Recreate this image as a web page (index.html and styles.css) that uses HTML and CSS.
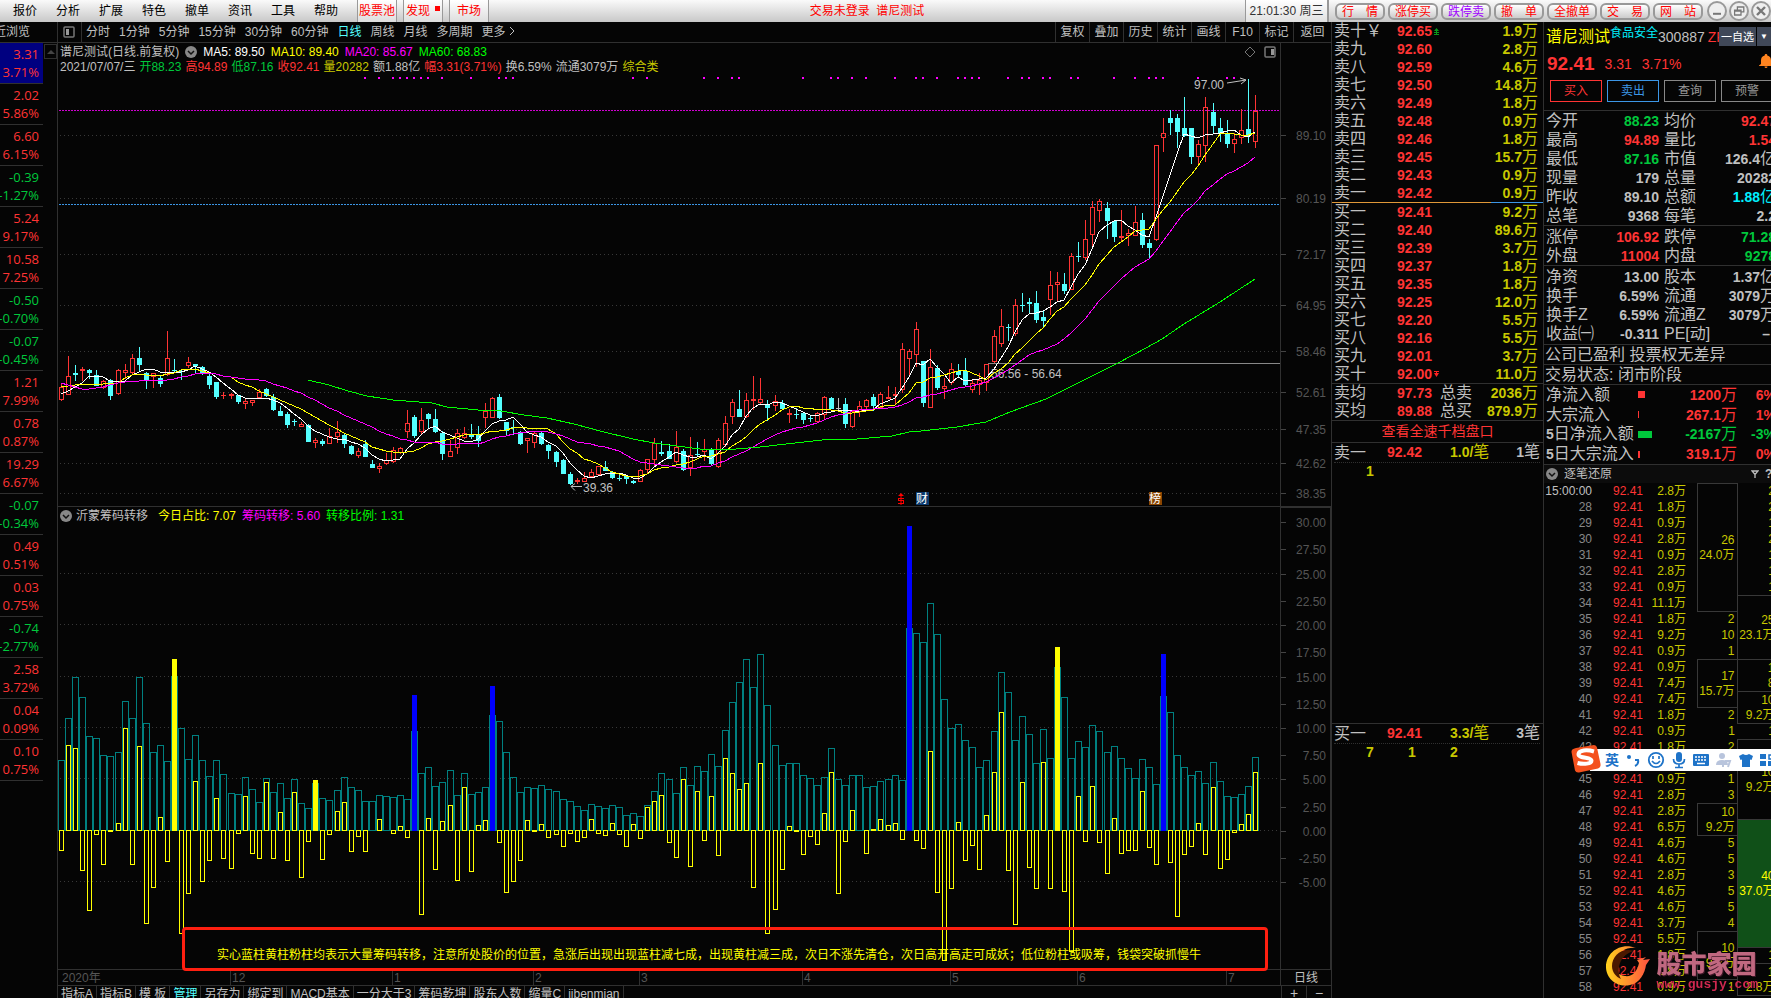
FILE: index.html
```html
<!doctype html>
<html lang="zh-CN">
<head>
    <meta charset="UTF-8">
    <meta name="viewport" content="width=device-width, initial-scale=1.0">
    <title>谱尼测试 300887</title>
    <link rel="stylesheet" href="styles.css">
</head>
<body>
<!-- 顶部菜单 -->
<header class="topbar">
    <nav class="menu">
        <a href="#">报价</a><a href="#">分析</a><a href="#">扩展</a><a href="#">特色</a><a href="#">撤单</a><a href="#">资讯</a><a href="#">工具</a><a href="#">帮助</a>
    </nav>
    <div class="hot">
        <button type="button">股票池</button>
        <button type="button" class="new">发现</button>
        <button type="button">市场</button>
    </div>
    <h1 class="title">交易未登录&nbsp; 谱尼测试</h1>
    <div class="clock">21:01:30 周三</div>
    <div class="pills">
        <button type="button">行　情</button>
        <button type="button">涨停买</button>
        <button type="button" class="purple">跌停卖</button>
        <button type="button">撤　单</button>
        <button type="button">全撤单</button>
        <button type="button">交　易</button>
        <button type="button">网　站</button>
    </div>
    <div class="win">
        <button type="button" aria-label="最小化"><svg viewBox="0 0 20 20"><path d="M5 13.5h10" stroke="#777" stroke-width="2.5"/></svg></button>
        <button type="button" aria-label="还原"><svg viewBox="0 0 20 20"><path d="M8 8V5h8v6h-3M4.500 9h8v6h-8zM4.500 10h8" fill="none" stroke="#777" stroke-width="1.600"/></svg></button>
        <button type="button" aria-label="关闭"><svg viewBox="0 0 20 20"><path d="M5 5l10 10M15 5L5 15" stroke="#777" stroke-width="3"/></svg></button>
    </div>
</header>

<main class="main">
    <div class="left">
        <!-- 周期工具栏 -->
        <div class="toolbar">
            <div class="recent"><span>最近浏览</span></div>
            <button type="button" class="layout" aria-label="布局"><svg width="12" height="12" viewBox="0 0 12 12"><rect x="1" y="1" width="10" height="10" rx="1" fill="none" stroke="#777" stroke-width="1.500"/><path d="M3 3h3v6H3z" fill="#999"/></svg></button>
            <nav class="periods">
                <a href="#">分时</a><a href="#">1分钟</a><a href="#">5分钟</a><a href="#">15分钟</a><a href="#">30分钟</a><a href="#">60分钟</a><a href="#" class="on">日线</a><a href="#">周线</a><a href="#">月线</a><a href="#">多周期</a><a href="#">更多
                <svg width="6" height="10" viewBox="0 0 6 10"><path d="M1 1l4 4-4 4" fill="none" stroke="#c0c0c0"/></svg></a>
            </nav>
            <nav class="tools">
                <a href="#">复权</a><a href="#">叠加</a><a href="#">历史</a><a href="#">统计</a><a href="#">画线</a><a href="#">F10</a><a href="#">标记</a><a href="#">返回</a>
            </nav>
        </div>

        <div class="work">
            <!-- 最近浏览 -->
            <aside class="watch">
                <ul id="watch"></ul>
                <button type="button" class="up" aria-label="向上"></button>
            </aside>

            <section class="charts">
                <div class="panel">
                    <div class="plot">
                        <svg id="kline" class="draw"></svg>
                        <div class="head">
                            <div class="info wide">
                                <span>谱尼测试(日线.前复权)</span>
                                <svg class="fold" viewBox="0 0 12 12"><circle cx="6" cy="6" r="6" fill="#888"/><path d="M3 5l3 3 3-3" fill="none" stroke="#111" stroke-width="1.500"/></svg>
                                <span class="white">MA5: 89.50</span>
                                <span class="yellow">MA10: 89.40</span>
                                <span class="pink">MA20: 85.67</span>
                                <span class="lime">MA60: 68.83</span>
                            </div>
                            <div class="info">
                                <span>2021/07/07/三</span><span class="down">开88.23</span><span class="rise">高94.89</span><span class="down">低87.16</span><span class="rise">收92.41</span><span class="vol">量20282</span><span>额1.88亿</span><span class="rise">幅3.31(3.71%)</span><span>换6.59%</span><span>流通3079万</span><span class="vol">综合类</span>
                            </div>
                        </div>
                        <div class="corner">
                            <svg width="12" height="12" viewBox="0 0 12 12"><path d="M6 1l5 5-5 5-5-5z" fill="none" stroke="#777"/></svg>
                            <svg width="12" height="12" viewBox="0 0 12 12"><rect x="1" y="1" width="10" height="10" rx="1" fill="none" stroke="#777" stroke-width="1.500"/><path d="M7 3h3v6H7z" fill="#999"/></svg>
                        </div>
                    </div>
                    <svg id="kaxis" class="axis"></svg>
                </div>

                <div class="panel">
                    <div class="plot">
                        <svg id="chips" class="draw"></svg>
                        <div class="head">
                            <div class="info wide">
                                <svg class="fold" viewBox="0 0 12 12"><circle cx="6" cy="6" r="6" fill="#888"/><path d="M3 5l3 3 3-3" fill="none" stroke="#111" stroke-width="1.500"/></svg>
                                <span class="name">沂蒙筹码转移</span>
                                <span class="yellow">今日占比: 7.07</span>
                                <span class="pink">筹码转移: 5.60</span>
                                <span class="lime">转移比例: 1.31</span>
                            </div>
                        </div>
                        <p class="note">实心蓝柱黄柱粉柱均表示大量筹码转移，注意所处股价的位置，急涨后出现出现蓝柱减七成，出现黄柱减三成，次日不涨先清仓，次日高开高走可成妖；低位粉柱或吸筹，钱袋突破抓慢牛</p>
                    </div>
                    <svg id="caxis" class="axis boxed"></svg>
                </div>

                <div class="months">
                    <svg id="months"></svg>
                    <span>日线</span>
                </div>
                <div class="tabs">
                    <nav>
                        <a href="#">指标A</a><a href="#">指标B</a><a href="#">模 板</a><a href="#" class="on">管理</a><a href="#">另存为</a><a href="#">绑定到</a><a href="#">MACD基本</a><a href="#">一分大于3</a><a href="#">筹码乾坤</a><a href="#">股东人数</a><a href="#">缩量C</a><a href="#">jibenmian</a>
                    </nav>
                    <button type="button">+</button>
                    <button type="button">−</button>
                </div>
            </section>
        </div>
    </div>

    <!-- 十档盘口 -->
    <section class="book">
        <table id="asks"></table>
        <table id="bids"></table>
        <table class="avg">
            <tr><th>卖均</th><td class="rise">97.73</td><th>总卖</th><td class="vol">2036<i>万</i></td></tr>
            <tr><th>买均</th><td class="rise">89.88</td><th>总买</th><td class="vol">879.9<i>万</i></td></tr>
        </table>
        <a class="more" href="#">查看全速千档盘口</a>
        <div class="queue">
            <div class="qhead"><i>卖一</i><b class="rise">92.42</b><b class="vol">1.0/<i>笔</i></b><b>1<i>笔</i></b></div>
            <div class="qlist"><span>1</span></div>
        </div>
        <div class="queue">
            <div class="qhead"><i>买一</i><b class="rise">92.41</b><b class="vol">3.3/<i>笔</i></b><b>3<i>笔</i></b></div>
            <div class="qlist"><span>7</span><span>1</span><span>2</span></div>
        </div>
    </section>

    <!-- 个股行情 -->
    <aside class="quote">
        <div class="inner">
            <div class="stock">
                <strong>谱尼测试</strong><a href="#">食品安全</a><span>300887</span><em>ZF</em>
            </div>
            <div class="last"><b>92.41</b><span>3.31</span><span>3.71%</span></div>
            <div class="trade">
                <button type="button" class="buy">买入</button>
                <button type="button" class="sell">卖出</button>
                <button type="button">查询</button>
                <button type="button">预警</button>
            </div>
            <table class="data">
                <tr><th>今开</th><td class="down">88.23</td><th>均价</th><td class="rise">92.47</td></tr>
                <tr><th>最高</th><td class="rise">94.89</td><th>量比</th><td class="rise">1.54</td></tr>
                <tr><th>最低</th><td class="down">87.16</td><th>市值</th><td>126.4<i>亿</i></td></tr>
                <tr><th>现量</th><td>179</td><th>总量</th><td>20282</td></tr>
                <tr><th>昨收</th><td>89.10</td><th>总额</th><td class="aqua">1.88<i>亿</i></td></tr>
                <tr><th>总笔</th><td>9368</td><th>每笔</th><td>2.2</td></tr>
            </table>
            <table class="data">
                <tr><th>涨停</th><td class="rise">106.92</td><th>跌停</th><td class="down">71.28</td></tr>
                <tr><th>外盘</th><td class="rise">11004</td><th>内盘</th><td class="down">9278</td></tr>
            </table>
            <table class="data">
                <tr><th>净资</th><td>13.00</td><th>股本</th><td>1.37<i>亿</i></td></tr>
                <tr><th>换手</th><td>6.59%</td><th>流通</th><td>3079<i>万</i></td></tr>
                <tr><th>换手Z</th><td>6.59%</td><th>流通Z</th><td>3079<i>万</i></td></tr>
                <tr><th>收益㈠</th><td>-0.311</td><th>PE[动]</th><td class="none">–</td></tr>
            </table>
            <p class="line">公司已盈利 投票权无差异</p>
            <p class="line">交易状态: 闭市阶段</p>
            <table class="flow">
                <tr><th>净流入额</th><td><span class="bar big"></span></td><td class="rise">1200<i>万</i></td><td class="rise">6%</td></tr>
                <tr><th>大宗流入</th><td><span class="bar thin"></span></td><td class="rise">267.1<i>万</i></td><td class="rise">1%</td></tr>
                <tr><th><b>5</b>日净流入额</th><td><span class="bar out"></span></td><td class="down">-2167<i>万</i></td><td class="down">-3%</td></tr>
                <tr><th><b>5</b>日大宗流入</th><td><span class="bar small"></span></td><td class="rise">319.1<i>万</i></td><td class="rise">0%</td></tr>
            </table>
            <div class="tickhead">
                <svg class="fold" viewBox="0 0 12 12"><circle cx="6" cy="6" r="6" fill="#888"/><path d="M3 5l3 3 3-3" fill="none" stroke="#111" stroke-width="1.500"/></svg>
                <span>逐笔还原</span>
                <svg width="8" height="8" viewBox="0 0 8 8"><path d="M1 1h6L4 4.500zM4 4v4" fill="none" stroke="#c0c0c0" stroke-width="1.300"/></svg>
                <b>?</b>
            </div>
            <table class="ticks" id="ticks"></table>
        </div>
        <div class="pick"><button type="button">一自选</button><button type="button" class="arrow" aria-label="展开">▼</button></div>
        <svg class="bell" width="14" height="14" viewBox="0 0 14 14"><path d="M7 0c1 0 1.300.6 1.300 1.400C11 2 12 4 12 6.500V10l2 1.500V12H0v-.5L2 10V6.500C2 4 3 2 5.700 1.400 5.700.6 6 0 7 0zM5.500 12.500h3Q8.500 14 7 14t-1.500-1.500z" fill="#ff8420"/></svg>
    </aside>
</main>

<!-- 输入法状态栏 -->
<div class="ime">
    <svg class="sogou" width="30" height="28" viewBox="0 0 30 28"><path d="M5 3L23 0q2.500 0 3 2.500L29.500 19q.5 3-2.500 4.500L8 27.500q-3 .5-4-2L.5 7Q0 4 5 3z" fill="#f4511e"/><path d="M23 6.500C16 4.500 8 5 7.500 9c-.5 4.500 13 3 13 6.500 0 3.500-8 4-14 2.500" fill="none" stroke="#fff" stroke-width="4"/></svg>
    <b>英</b>
    <svg width="14" height="18" viewBox="0 0 14 18"><circle cx="3" cy="6" r="2" fill="#1e73c8"/><path d="M9 9h3q1 4-3 6" fill="none" stroke="#1e73c8" stroke-width="2"/></svg>
    <svg width="18" height="18" viewBox="0 0 18 18"><circle cx="9" cy="9" r="7.200" fill="none" stroke="#1e73c8" stroke-width="1.800"/><path d="M6 5v3M12 5v3M5 10q4 5 8 0" fill="none" stroke="#1e73c8" stroke-width="1.700"/></svg>
    <svg width="14" height="18" viewBox="0 0 14 18"><rect x="4" y="1" width="6" height="10" rx="3" fill="#1e73c8"/><path d="M1.500 8q0 5 5.500 5t5.500-5M7 13v3M3 16.500h8" fill="none" stroke="#1e73c8" stroke-width="1.700"/></svg>
    <svg width="16" height="18" viewBox="0 0 16 18"><rect y="3" width="16" height="12" rx="1" fill="#1e73c8"/><path d="M2 6h12M2 9h12" stroke="#fff" stroke-width="1.500" stroke-dasharray="2 1"/><path d="M4 12.500h8" stroke="#fff" stroke-width="1.500"/></svg>
    <svg width="16" height="18" viewBox="0 0 16 18"><circle cx="6" cy="5" r="3" fill="#b8c4dc"/><path d="M0 14q0-5 6-5t6 5z" fill="#b8c4dc"/><path d="M7 10v6M9 10h5l-2 6" fill="none" stroke="#b8c4dc" stroke-width="2"/></svg>
    <svg width="14" height="18" viewBox="0 0 14 18"><path d="M4 3q3 2 6 0l4 2-1.500 4L11 8.500V16H3V8.500L1.500 9 0 5z" fill="#1e73c8"/></svg>
    <svg width="14" height="18" viewBox="0 0 14 18"><path d="M0 3h6v5H0zM0 10h6v5H0zM8 10h6v5H8z" fill="#1e73c8"/><path d="M9 4h4v4H9z" fill="none" stroke="#1e73c8" stroke-width="1.500"/></svg>
</div>

<!-- 站点水印 -->
<div class="brand">
    <svg width="46" height="42" viewBox="0 0 46 42">
        <defs><linearGradient id="fire" x1="0" x2="1"><stop offset="0" stop-color="#ffd21c"/><stop offset="1" stop-color="#ff5040"/></linearGradient></defs>
        <path d="M31 2C16-4 1 6 1 21c0 12 12 21 24 18 10-2 15-12 16-20l4-6-7 1 3-3-9 3 2 3c-2 9-7 14-14 13C11 29 7 22 11 13c3-7 10-12 20-11z" fill="url(#fire)"/>
        <path d="M29 5C17 1 7 10 7 20c0 6 4 11 9 13C11 24 14 9 29 5z" fill="#4a1800"/>
    </svg>
    <div><strong>股市家园</strong><span>www.gusjy.com</span></div>
</div>

<script src="script.js"></script>
</body>
</html>
```
FILE: styles.css
```css
* {
    margin: 0;
    padding: 0;
    box-sizing: border-box;
}

body {
    display: flex;
    flex-direction: column;
    height: 100vh;
    overflow: hidden;
    background: #050505;
    color: #c0c0c0;
    font: 12px/16px "Liberation Sans", "Noto Sans CJK SC", sans-serif;
    white-space: nowrap;
}

a {
    color: inherit;
    text-decoration: none;
}

button {
    font: inherit;
    color: inherit;
    background: none;
    border: none;
    cursor: pointer;
    white-space: nowrap;
}

ul {
    list-style: none;
}

i, em {
    font-style: normal;
}

svg {
    display: block;
    flex: none;
}

table {
    border-collapse: collapse;
    border-spacing: 0;
}

th, td {
    vertical-align: middle;
}

.rise { color: #ff3434; }
.down { color: #00c83c; }
.vol { color: #c8c800; }
.aqua { color: #00f0ff; }
.white { color: #fff; }
.yellow { color: #ff0; }
.pink { color: #f0f; }
.lime { color: #0f0; }

/* 顶部 */
.topbar {
    display: flex;
    flex: none;
    height: 22px;
    background: linear-gradient(#fafafa, #c8c8c8);
    color: #000;
    line-height: 22px;
}

.menu {
    display: flex;
    flex: none;
    gap: 19px;
    padding-left: 13px;
    width: 357px;
}

.hot {
    display: flex;
    gap: 6px;
}

.hot button {
    position: relative;
    width: 40px;
    border: 1px solid #999;
    border-width: 0 1px;
    background: linear-gradient(#fff, #ddd);
    color: #f00;
    line-height: 22px;
}

.hot .new {
    padding-right: 10px;
}

.hot .new::after {
    content: "";
    position: absolute;
    right: 2px;
    top: 6px;
    width: 5px;
    height: 5px;
    background: #f00;
}

.title {
    flex: 1;
    text-align: center;
    color: #f00;
    font-size: 12px;
    font-weight: normal;
}

.clock {
    width: 84px;
    border: 2px solid #999;
    border-width: 0 2px 0 1px;
    background: linear-gradient(#fff, #e0e0e0);
    color: #333;
    text-align: center;
}

.pills {
    display: flex;
    gap: 3px;
    padding: 3px 4px 2px 6px;
}

.pills button {
    width: 50px;
    border: 2px solid #999;
    border-radius: 6px;
    background: linear-gradient(#fff, #ccc);
    color: #f00;
    line-height: 12px;
}

.pills .purple {
    color: #a000ff;
}

.win {
    display: flex;
    gap: 2px;
    padding-top: 1px;
}

.win button {
    width: 20px;
    height: 20px;
    border: 2px solid #999;
    border-radius: 50%;
    background: #eee;
}

/* 主体 */
.main {
    display: flex;
    flex: 1;
    min-height: 0;
}

.left {
    display: flex;
    flex: 1;
    flex-direction: column;
    min-width: 0;
}

.toolbar {
    display: flex;
    flex: none;
    height: 21px;
    border-bottom: 1px solid #303030;
    line-height: 20px;
}

.recent {
    display: flex;
    justify-content: flex-end;
    width: 58px;
    padding-right: 27px;
    overflow: hidden;
    border-right: 1px solid #303030;
}

.layout {
    width: 24px;
    padding-left: 5px;
    border-right: 1px solid #303030;
}

.periods {
    display: flex;
    flex: 1;
    gap: 9px;
    padding-left: 4px;
}

.periods svg {
    display: inline-block;
}

.periods .on, .tabs .on {
    color: #54ffff;
}

.tools {
    display: flex;
}

.tools a {
    width: 34px;
    border-left: 1px solid #303030;
    text-align: center;
}

.tools a:last-child {
    width: 38px;
}

.work {
    display: flex;
    flex: 1;
    min-height: 0;
}

.watch {
    display: flex;
    width: 58px;
    border-right: 1px solid #303030;
    font-family: "Open Sans", sans-serif;
    font-size: 13px;
}

.watch ul {
    width: 43px;
    overflow: hidden;
}

.watch li {
    display: flex;
    flex-direction: column;
    align-items: flex-end;
    height: 41px;
    padding: 2px 4px 0 0;
    border-bottom: 1px solid #303030;
    line-height: 18px;
}

.watch li:first-child {
    background: #000080;
}

.watch .up {
    width: 13px;
    height: 15px;
    margin: 1px 0 0 1px;
    border: 1px solid #303030;
}

.watch .up::after {
    content: "";
    display: block;
    margin: 0 2px;
    border: 4px solid transparent;
    border-width: 0 4px 4px;
    border-bottom-color: #444;
}

.charts {
    display: flex;
    flex: 1;
    flex-direction: column;
    min-width: 0;
}

.panel {
    display: flex;
    flex: 1;
    min-height: 0;
}

.plot {
    position: relative;
    flex: 1;
    min-width: 0;
    border-bottom: 1px solid #303030;
}

.draw {
    position: absolute;
    left: 0;
    top: 0;
    width: 100%;
    height: 100%;
}

.head {
    position: relative;
    padding: 1px 2px;
}

.info {
    display: flex;
    gap: 4px;
    height: 14px;
    align-items: center;
}

.info.wide {
    gap: 6px;
    height: 16px;
}

.info .name {
    margin: 0 4px 0 -2px;
}

.fold {
    width: 12px;
    height: 12px;
}

.corner {
    position: absolute;
    top: 3px;
    right: 4px;
    display: flex;
    gap: 8px;
}

.axis {
    width: 51px;
    height: 100%;
    border-left: 1px solid #303030;
    border-bottom: 1px solid #303030;
}

.axis.boxed {
    border: 1px solid #303030;
}

svg text {
    font-size: 12px;
    fill: #555;
}

svg .light {
    fill: #c0c0c0;
}

svg .flag {
    fill: #fff;
}

.note {
    position: absolute;
    left: 124px;
    right: 12px;
    bottom: -2px;
    height: 44px;
    padding: 17px 32px 0;
    border: 3px solid #ff1f10;
    border-radius: 4px;
    color: #ff0;
}

.months {
    display: flex;
    flex: none;
    height: 16px;
    border-bottom: 1px solid #303030;
}

.months svg {
    flex: 1;
    min-width: 0;
    height: 100%;
}

.months span {
    width: 51px;
    border-left: 1px solid #303030;
    text-align: center;
}

.tabs {
    display: flex;
    flex: none;
    height: 12px;
    overflow: hidden;
}

.tabs nav {
    display: flex;
    flex: 1;
}

.tabs a {
    padding: 0 3px;
    border-right: 1px solid #303030;
}

.tabs button {
    width: 25px;
    border-left: 1px solid #303030;
    font-size: 14px;
    line-height: 14px;
}

/* 盘口 */
.book {
    display: flex;
    flex: none;
    flex-direction: column;
    width: 213px;
    border: 1px solid #303030;
    border-width: 0 1px;
    font-size: 14px;
    font-weight: bold;
    line-height: 18px;
}

.book table {
    width: 100%;
    table-layout: fixed;
    border-bottom: 1px solid #303030;
}

.book #asks {
    border-collapse: separate;
    border-image: linear-gradient(90deg, #e09838 75%, #3c96e6 75%) 1;
}

.book th, .book i, .quote th, .quote i {
    font-size: 16px;
    font-weight: normal;
}

.book i, .quote i {
    line-height: 1;
}

.book .qhead > i {
    line-height: inherit;
}

.book tr {
    height: 18px;
}

.book th {
    width: 60px;
    padding-left: 2px;
    text-align: left;
}

.book th + td {
    width: 40px;
    text-align: right;
}

.book td:last-child {
    width: auto;
    padding-right: 5px;
    text-align: right;
}

.book .lot {
    width: 20px;
    padding-left: 2px;
}

.book .avg th:nth-child(3) {
    width: 40px;
    padding-left: 8px;
}

.more {
    height: 22px;
    border-bottom: 1px solid #303030;
    color: #ff3434;
    font-size: 14px;
    font-weight: normal;
    line-height: 21px;
    text-align: center;
}

.queue {
    flex: 281;
    border-bottom: 1px solid #303030;
}

.queue:last-child {
    flex: 275;
    border: none;
}

.qhead {
    display: grid;
    grid-template-columns: 53px 63px 1fr auto;
    height: 20px;
    margin: 0 3px 0 2px;
    border-bottom: 1px dotted #303030;
    line-height: 19px;
}

.qlist {
    display: grid;
    grid-template-columns: repeat(3, 42px);
    padding-left: 34px;
    color: #c8c800;
    line-height: 16px;
}

/* 行情 */
.quote {
    position: relative;
    flex: none;
    width: 227px;
    overflow: hidden;
    font-size: 14px;
}

.inner {
    width: 232px;
}

.stock {
    display: flex;
    height: 30px;
    padding-left: 2px;
    line-height: 30px;
}

.stock strong {
    color: #ff0;
    font-size: 16px;
    font-weight: normal;
}

.stock a {
    color: #00f0ff;
    font-size: 12px;
    line-height: 22px;
}

.stock em {
    margin-left: 3px;
    color: #ff3434;
}

.last {
    display: flex;
    gap: 10px;
    height: 28px;
    padding-left: 3px;
    color: #ff3434;
    line-height: 24px;
}

.last b {
    font-size: 19px;
}

.trade {
    display: flex;
    gap: 5px;
    height: 31px;
    padding-left: 6px;
    border-bottom: 1px solid #303030;
}

.trade button {
    flex: none;
    width: 52px;
    height: 22px;
    border: 1px solid #888;
    color: #999;
    font-size: 12px;
}

.trade .buy {
    border-color: #ff3434;
    color: #ff3434;
}

.trade .sell {
    border-color: #3c96e6;
    color: #3c96e6;
}

.data, .flow {
    width: 100%;
    table-layout: fixed;
    border-collapse: separate;
    border-bottom: 1px solid #303030;
    font-weight: bold;
    line-height: 18px;
}

.data tr, .flow tr {
    height: 19px;
}

.data th {
    width: 56px;
    padding-left: 2px;
    text-align: left;
}

.data td {
    width: 59px;
    text-align: right;
}

.data th:nth-child(3) {
    padding-left: 5px;
    width: 58px;
}

.data .none {
    padding-right: 6px;
}

.data + .data {
    padding-top: 1px;
}

.data + .data + .data {
    padding-bottom: 1px;
}

.line {
    height: 20px;
    padding-left: 1px;
    border-bottom: 1px solid #303030;
    font-size: 16px;
    line-height: 19px;
}

.flow {
    height: 80px;
}

.flow th {
    width: 94px;
    padding-left: 2px;
    text-align: left;
}

.flow th b {
    font-size: 14px;
    line-height: 1;
}

.flow td {
    width: 39px;
    text-align: right;
}

.flow td:nth-child(2) {
    width: 20px;
}

.flow td:nth-child(3) {
    width: 79px;
}

.flow .bar {
    display: block;
    width: 2px;
    height: 7px;
    background: #ff3434;
}

.flow .big {
    width: 7px;
}

.flow .thin {
    width: 1px;
}

.flow .out {
    width: 14px;
    background: #00c83c;
}

.tickhead {
    display: flex;
    align-items: center;
    gap: 6px;
    height: 18px;
    padding-left: 2px;
    background: #0c0c0c;
    font-size: 12px;
}

.tickhead span {
    width: 181px;
}

.ticks {
    width: 100%;
    table-layout: fixed;
    font-size: 12px;
    line-height: 15px;
}

.ticks tr {
    height: 16px;
}

.ticks td {
    width: 40px;
    text-align: right;
}

.ticks td:nth-child(1) {
    width: 48px;
    color: #888;
}

.ticks tr:first-child td:first-child {
    color: #c0c0c0;
}

.ticks td:nth-child(2) {
    width: 51px;
}

.ticks td:nth-child(3) {
    width: 43px;
}

.ticks .gap {
    width: 11px;
}

.ticks .gap ~ .vol {
    padding-right: 2px;
}

.ticks .box {
    border: 1px solid #383838;
}

.ticks .fill {
    background: #105018;
    color: #ff0;
}

.pick {
    position: absolute;
    right: 0;
    top: 5px;
    display: flex;
    gap: 1px;
    height: 19px;
}

.pick button {
    width: 37px;
    background: #404858;
    color: #fff;
    font-size: 11px;
}

.pick .arrow {
    width: 14px;
    font-size: 8px;
}

.bell {
    position: absolute;
    right: -2px;
    top: 32px;
}

/* 悬浮 */
.ime {
    position: fixed;
    right: 0;
    bottom: 227px;
    display: flex;
    align-items: center;
    gap: 7px;
    width: 181px;
    height: 22px;
    padding-left: 15px;
    background: #fff;
    color: #1e73c8;
    font-size: 14px;
}

.ime .sogou {
    position: absolute;
    left: -19px;
    top: -4px;
}

.brand {
    position: fixed;
    right: 13px;
    bottom: 7px;
    display: flex;
    align-items: center;
    gap: 6px;
}

.brand strong {
    display: block;
    height: 26px;
    margin-top: 10px;
    color: #c06880;
    font-size: 25px;
    font-weight: 900;
    line-height: 24px;
    text-shadow: 1px 1px 0 #401828;
}

.brand span {
    display: block;
    color: #d02850;
    font: bold 13px/13px "Liberation Mono", monospace;
}
```
FILE: script.js
```js
// 最近浏览：涨跌、涨幅
const watch = [
    ['3.31', '3.71%'], ['2.02', '5.86%'], ['6.60', '6.15%'], ['-0.39', '-1.27%'], ['5.24', '9.17%'], ['10.58', '7.25%'],
    ['-0.50', '-0.70%'], ['-0.07', '-0.45%'], ['1.21', '7.99%'], ['0.78', '0.87%'], ['19.29', '6.67%'], ['-0.07', '-0.34%'],
    ['0.49', '0.51%'], ['0.03', '0.75%'], ['-0.74', '-2.77%'], ['2.58', '3.72%'], ['0.04', '0.09%'], ['0.10', '0.75%']
];

document.getElementById('watch').innerHTML = watch.map(w =>
    `<li class="${w[0][0] === '-' ? 'down' : 'rise'}"><span>${w[0]}</span><span>${w[1]}</span></li>`).join('');

// 十档
const asks = [['卖十￥', '92.65', '1.9'], ['卖九', '92.60', '2.8'], ['卖八', '92.59', '4.6'], ['卖七', '92.50', '14.8'], ['卖六', '92.49', '1.8'],
    ['卖五', '92.48', '0.9'], ['卖四', '92.46', '1.8'], ['卖三', '92.45', '15.7'], ['卖二', '92.43', '0.9'], ['卖一', '92.42', '0.9']];
const bids = [['买一', '92.41', '9.2'], ['买二', '92.40', '89.6'], ['买三', '92.39', '3.7'], ['买四', '92.37', '1.8'], ['买五', '92.35', '1.8'],
    ['买六', '92.25', '12.0'], ['买七', '92.20', '5.5'], ['买八', '92.16', '5.5'], ['买九', '92.01', '3.7'], ['买十', '92.00', '11.0']];

function level(r) {
    let mark = '';
    if (r[1] === '92.65') mark = '<svg width="5" height="7" viewBox="0 0 5 7"><path d="M0 3L2.500 0 5 3zM2 2h1v4H2zM0 4h5v1H0zM0 6h5v1H0z" fill="#0a9a1a"/></svg>';
    if (r[1] === '92.00') mark = '<svg width="5" height="6" viewBox="0 0 5 6"><path d="M0 0h5v1H0zM2 0h1v3H2zM0 2h5L2.500 6z" fill="#f22"/></svg>';
    return `<tr><th>${r[0]}</th><td class="rise">${r[1]}</td><td class="lot">${mark}</td><td class="vol">${r[2]}<i>万</i></td></tr>`;
}

document.getElementById('asks').innerHTML = asks.map(level).join('');
document.getElementById('bids').innerHTML = bids.map(level).join('');

// 逐笔
const lots = ['2.8', '1.8', '0.9', '2.8', '0.9', '2.8', '0.9', '11.1', '1.8', '9.2', '0.9', '0.9', '7.4', '7.4', '1.8', '0.9',
    '1.8', '0.9', '0.9', '2.8', '2.8', '6.5', '4.6', '4.6', '2.8', '4.6', '4.6', '3.7', '5.5', '1.8', '1.8', '0.9'];
// [起始行, 行数, 笔数, 金额]
const groupA = [[0, 8, 26, '24.0万'], [8, 1, 2], [9, 1, 10], [10, 1, 1], [11, 3, 17, '15.7万'], [14, 1, 2], [15, 1, 1], [16, 1, 2], [17, 1, 1],
    [18, 1, 1], [19, 1, 3], [20, 2, 10, '9.2万'], [22, 1, 5], [23, 1, 5], [24, 1, 3], [25, 1, 5], [26, 1, 5], [27, 1, 4], [28, 3, 10, '9.2万'], [31, 1, 1]];
const groupB = [[0, 1, 2], [1, 1, 2], [2, 1, 1], [3, 1, 2], [4, 1, 1], [5, 1, 1], [6, 1, 1], [7, 4, 25, '23.1万'], [11, 2, 1, '8'], [13, 2, 10, '9.2万'],
    [15, 1, 1], [16, 5, 10, '9.2万'], [21, 8, 40, '37.0万'], [29, 1, 1], [30, 2, 1, '2.8万']];

function cell(group, row) {
    const g = group.find(g => g[0] === row);
    if (!g) return '';
    return `<td rowspan="${g[1]}" class="vol${g[3] ? ' box' : ''}${g[2] === 40 ? ' fill' : ''}">${g[2]}${g[3] ? '<br>' + g[3] : ''}</td>`;
}

document.getElementById('ticks').innerHTML = lots.map((v, i) =>
    `<tr><td>${i ? 27 + i : '15:00:00'}</td><td class="rise">92.41</td><td class="vol">${v}万</td><td class="gap"></td>${cell(groupA, i)}${cell(groupB, i)}</tr>`).join('');

// K线：[高, 实体上沿, 实体下沿, 低, 阴线=1]，纵坐标每格1/3像素
const candles = [
    [162,171,209,212],[78,139,196,196],[105,129,134,153,1],[112,118,123,153],[116,120,129,147,1],[121,135,167,168,1],[150,154,173,178],[148,150,198,210,1],
    [118,121,191,194],[102,121,130,148],[72,85,130,136],[51,84,105,124,1],[126,129,150,177,1],[130,130,140,174],[138,144,162,171,1],[3,85,136,138],
    [87,121,124,126,1],[118,122,127,150,1],[81,97,109,115],[102,102,108,130,1],[108,111,130,135,1],[132,138,165,177,1],[156,156,201,207,1],[186,195,198,207],
    [190,193,199,207],[195,195,216,221,1],[208,214,221,237],[210,211,220,227],[178,187,203,205],[174,177,198,202,1],[192,201,240,243,1],[228,243,258,258,1],
    [247,252,285,293,1],[267,272,276,288,1],[275,283,290,290],[283,285,336,336,1],[324,331,338,353],[328,334,342,347,1],[294,319,341,342],[273,307,322,340],
    [310,315,342,354,1],[346,348,372,375,1],[354,364,377,384],[330,342,381,381,1],[390,402,414,414,1],[400,409,416,429],[369,391,403,405],[351,361,397,398],
    [351,355,370,372],[240,280,307,323],[255,261,318,323,1],[234,271,307,312],[249,252,266,294,1],[238,267,306,310,1],[304,308,372,390,1],[330,364,380,381],
    [297,310,355,372],[291,309,325,326],[282,312,320,327,1],[288,312,333,350,1],[219,244,263,293],[202,205,263,264],[192,201,264,266,1],[276,276,303,318,1],
    [270,291,294,315,1],[303,306,342,345,1],[324,325,332,369],[303,310,340,354],[306,309,342,345,1],[342,345,362,387,1],[363,366,396,411,1],[387,390,432,432,1],
    [426,432,462,465,1],[444,451,457,462],[426,445,455,457],[418,427,440,440],[408,409,435,436],[393,411,423,424,1],[424,427,444,447,1],[430,443,447,453,1],
    [438,439,447,462,1],[450,453,459,462,1],[418,421,455,456],[387,388,419,430],[324,339,391,411],[333,366,372,378,1],[343,363,387,388,1],[303,352,397,400],
    [357,363,420,423,1],[321,376,413,438],[336,371,375,381,1],[327,357,365,393],[355,360,402,405,1],[324,331,412,414],[258,280,344,350],[207,217,262,282],
    [180,237,261,262,1],[189,211,262,264],[138,208,212,240],[144,208,220,222],[210,225,234,272,1],[195,214,229,243],[210,219,237,241,1],[238,249,254,279],
    [234,252,255,267,1],[246,249,270,282,1],[255,264,268,276,1],[246,250,275,276],[198,202,254,268],[201,204,237,238,1],[204,235,238,244,1],[204,222,282,294,1],
    [240,244,292,294],[212,229,247,261],[207,211,230,240],[192,201,228,243,1],[187,193,233,235],[168,202,206,208],[171,193,197,222],[39,58,181,188],
    [57,64,86,135],[-24,-2,74,112],[93,93,219,231,1],[57,112,233,234],[105,114,174,181,1],[145,169,176,207],[99,118,160,164],[102,123,135,141,1],
    [84,123,165,170,1],[148,160,181,188],[129,151,166,195],[102,103,160,183],[0,19,95,100],[-63,-11,43,51],[-18,-9,-6,33,1],[-92,-74,11,18],
    [-111,-75,-72,-54,1],[-96,-84,-78,-48,1],[-117,-81,-30,-21,1],[-57,-39,-27,-9,1],[-177,-134,-90,-45],[-174,-143,-136,-84],[-171,-138,-117,-108,1],[-231,-221,-121,-120],
    [-264,-222,-219,-204,1],[-330,-273,-217,-210],[-387,-368,-286,-249],[-393,-386,-358,-324],[-384,-366,-327,-273,1],[-327,-327,-279,-264,1],[-360,-281,-277,-267],[-303,-290,-281,-252],
    [-372,-323,-283,-283],[-351,-330,-255,-246,1],[-273,-261,-246,-216,1],[-554,-554,-269,-268],[-636,-590,-575,-534],[-660,-636,-621,-585,1],[-648,-636,-594,-546,1],[-699,-606,-582,-579,1],
    [-606,-606,-519,-498,1],[-570,-557,-518,-498],[-699,-668,-553,-503],[-681,-654,-612,-592,1],[-636,-606,-590,-564,1],[-630,-591,-558,-546,1],[-590,-572,-557,-531],[-663,-599,-575,-559],
    [-753,-603,-582,-561,1],[-705,-656,-565,-546]
];

// 均线在窗口左侧之前的部分
const lead5 = [193, 182, 172, 160];
const lead10 = [172, 169, 166, 163, 163, 163, 163, 160, 158];
const lead20 = [158, 166, 172, 178, 176, 173, 170, 166, 160, 157, 154, 152, 151, 151, 151, 149, 146, 142, 138];
const ma60 = [[35,150],[38,165],[40.6,182],[43.3,199],[47,211],[52.5,220],[54.7,231],[59,240],[62.3,243],[65.5,254],[68.8,264],[72.6,283],[76.3,303],
    [81,328],[84,338],[90.4,356],[95.5,358],[99,350],[102.6,343],[109,328],[112.7,327],[117.7,317],[120,306],[121.8,304],[126.8,291],[131,275],
    [134.4,245],[139.5,207],[144.5,153],[149.6,98],[153.6,55],[155.8,28],[159,-18],[164,-85],[169,-153]];

const dots = [43,45,47,48,49,50,51,52,54,58,62,63,64,81,83,91,93,95,96,105,109,110,112,114,118,121,122,124,127,128,129,130,
    134,136,137,139,140,143,144,149,152,154,155,156,161,165,166];

// 筹码：[占比, 转移, 实心柱高, 颜色]
const chips = [
    [70,-20],[112,85],[153,82],[133,-40],[94,-80],[92,-4],[75,-34],[74,-1],[78,7],[129,102],[112,-34],[153,84],[107,-93],[78,-57],[85,13],[69,-31],
    [154,0,171,'#ff0'],[102,-103],[71,-63],[95,49],[70,-51],[54,-30],[70,32],[56,-28],[37,-38],[36,-3],[53,34],[41,-23],[28,-28],[52,48],[38,-28],[47,18],
    [32,-30],[51,38],[27,-47],[22,-11],[47,0,50,'#ff0'],[32,-29],[30,-4],[40,19],[53,28],[43,-21],[40,-6],[29,-21],[29,0],[35,11],[34,0],[33,-3],
    [35,4],[31,-7],[99,0,135,'#00f'],[57,-84],[63,12],[44,-39],[48,9],[60,25],[35,-50],[57,43],[36,-41],[38,5],[43,10],[115,0,144,'#00f'],[109,-12],[78,-62],
    [53,-51],[38,-30],[43,10],[42,-1],[45,6],[41,-7],[39,-4],[31,-16],[29,-3],[24,-11],[20,-7],[26,11],[24,-3],[22,-5],[25,7],[23,-4],
    [15,-16],[17,6],[14,-8],[25,23],[39,29],[57,35],[51,-12],[37,-27],[63,51],[45,-36],[64,39],[59,-10],[76,34],[64,-25],[100,72],[128,57],
    [148,41],[171,47],[143,-57],[176,67],[125,-103],[85,-79],[65,-39],[67,4],[67,-1],[55,-24],[52,-6],[45,-14],[53,17],[82,58],[51,-63],[45,-11],
    [55,20],[55,0],[43,-23],[44,1],[49,11],[51,5],[55,7],[50,-9],[202,0,304,'#00f'],[197,-10],[188,-18],[227,79],[196,-62],[131,-130],[102,-58],[106,8],
    [90,-30],[83,-15],[63,-39],[70,15],[99,58],[158,118],[138,-40],[90,-94],[114,48],[96,-37],[67,-58],[101,68],[72,-58],[163,0,183,'#ff0'],[133,-61],[72,-121],
    [89,34],[83,-11],[105,44],[99,-12],[78,-43],[84,12],[72,-23],[62,-20],[52,-20],[71,39],[63,-17],[46,-34],[134,0,176,'#00f'],[118,-32],[75,-86],[63,-24],
    [55,-16],[59,7],[47,-24],[68,43],[49,-38],[34,-29],[33,-2],[36,6],[44,16],[73,58]
];

const priceAxis = [['89.10', 92], ['80.19', 155], ['72.17', 211], ['64.95', 262], ['58.46', 308], ['52.61', 349], ['47.35', 386], ['42.62', 420], ['38.35', 450]];
const chipAxis = [['30.00', 14], ['27.50', 41], ['25.00', 66], ['22.50', 93], ['20.00', 117], ['17.50', 144], ['15.00', 169], ['12.50', 196],
    ['10.00', 220], ['7.50', 247], ['5.00', 271], ['2.50', 299], ['0.00', 323], ['-2.50', 350], ['-5.00', 374]];
const months = [['12', 172], ['1', 334], ['2', 475], ['3', 581], ['4', 744], ['5', 892], ['6', 1019], ['7', 1168]];

const kline = document.getElementById('kline');
const chipBox = document.getElementById('chips');

// 基准画布 1222 x 463，按窗口缩放
function draw() {
    const w = kline.clientWidth;
    const h = kline.clientHeight;
    const sx = w / 1222;
    const sy = h / 463;
    const x = i => Math.round((3 + i * 7.0645) * sx);
    const y = v => Math.round((v / 3 + 287) * sy);
    const line = (x1, y1, x2, y2, c, more) =>
        `<line x1="${x1}" y1="${y1 + .5}" x2="${x2}" y2="${y2 + .5}" stroke="${c}" ${more || ''}/>`;
    const poly = (pts, c) => `<polyline points="${pts.join(' ')}" fill="none" stroke="${c}" shape-rendering="crispEdges"/>`;

    let s = '';
    priceAxis.forEach(a => s += line(2, Math.round(a[1] * sy), w, Math.round(a[1] * sy), '#383838', 'stroke-dasharray="1 3"'));
    s += line(1, Math.round(67 * sy), w, Math.round(67 * sy), '#d000d0', 'stroke-dasharray="2 1"');
    s += line(1, Math.round(161 * sy), w, Math.round(161 * sy), '#3c96e6', 'stroke-dasharray="2 1"');
    s += line(930 * sx, Math.round(320 * sy), w, Math.round(320 * sy), '#888');
    s += `<text class="light" x="${933 * sx}" y="${335 * sy}">56.56 - 56.64</text>`;
    dots.forEach(i => s += `<rect x="${x(i) - 1}" y="${Math.round(34 * sy)}" width="2" height="2" fill="#f0f"/>`);

    candles.forEach((k, i) => {
        const c = i === 110 ? '#c0c0c0' : k[4] ? '#54ffff' : '#ff3434';
        const top = y(k[1]);
        const len = Math.max(y(k[2]) - top, 1);
        s += `<rect x="${x(i)}" y="${y(k[0])}" width="1" height="${Math.max(top - y(k[0]), 0)}" fill="${c}"/>`;
        s += `<rect x="${x(i)}" y="${top + len}" width="1" height="${Math.max(y(k[3]) - top - len, 0)}" fill="${c}"/>`;
        if (k[4] || len < 2) {
            s += `<rect x="${x(i) - 2}" y="${top}" width="5" height="${len}" fill="${c}"/>`;
        } else {
            s += `<rect x="${x(i) - 1.5}" y="${top + .5}" width="4" height="${len - 1}" fill="none" stroke="${c}"/>`;
        }
    });

    // 对数坐标，先还原成价格再求均值
    const price = v => Math.exp(-(v / 3) / 424.6);
    const closes = candles.map(k => price(k[4] ? k[2] : k[1]));
    const average = (n, lead) => candles.map((k, i) => {
        let v = lead[i];
        if (i >= lead.length) {
            const from = Math.max(0, i - n + 1);
            const part = closes.slice(from, i + 1);
            v = -Math.log(part.reduce((a, b) => a + b) / part.length) * 424.6 * 3;
        }
        return x(i) + ',' + y(v);
    });
    s += poly(average(5, lead5), '#fff');
    s += poly(average(10, lead10), '#ff0');
    s += poly(average(20, lead20), '#f0f');
    s += poly(ma60.map(p => x(p[0]) + ',' + y(p[1])), '#0f0');

    s += `<text class="light" x="${1136 * sx}" y="${46 * sy}">97.00</text>`;
    s += `<path d="M${1169 * sx} ${40 * sy}L${1188 * sx} ${37 * sy}m-6 -2l6 2l-5 4" fill="none" stroke="#c0c0c0"/>`;
    s += `<text class="light" x="${525 * sx}" y="${449 * sy}">39.36</text>`;
    s += `<path d="M${524 * sx} ${443.5 * sy}h-11m4 -3l-4 3l4 4" fill="none" stroke="#c0c0c0"/>`;
    s += `<path transform="translate(${839 * sx} ${450 * sy})" d="M1 3L4 0l3 3zM3.500 2h1v10h-1zM1 5h6v1H2v1h5v4H1v-1h5V8H1z" fill="#f00"/>`;
    s += `<rect x="${858 * sx}" y="${449 * sy}" width="13" height="13" fill="#0a3a6e"/><text class="flag" x="${858 * sx}" y="${460 * sy}">财</text>`;
    s += `<rect x="${1091 * sx}" y="${449 * sy}" width="13" height="13" fill="#8a4500"/><text class="flag" x="${1091 * sx}" y="${460 * sy}">榜</text>`;
    kline.innerHTML = s;

    // 副图
    const zero = Math.round(323 * sy);
    s = '';
    [66, 117, 169, 220, 271, 323, 374].forEach(v => s += line(2, Math.round(v * sy), w, Math.round(v * sy), '#383838', 'stroke-dasharray="1 3"'));
    chips.forEach((c, i) => {
        const total = Math.round(c[0] * sy);
        s += `<rect x="${x(i) - 2.5}" y="${zero - total + .5}" width="6" height="${total}" fill="none" stroke="#008080"/>`;
    });
    chips.forEach((c, i) => {
        const len = Math.round(Math.abs(c[1]) * sy);
        if (c[2]) {
            s += `<rect x="${x(i) - 2}" y="${zero - Math.round(c[2] * sy)}" width="5" height="${Math.round(c[2] * sy) + 1}" fill="${c[3]}"/>`;
        } else {
            s += `<rect x="${x(i) - 1.5}" y="${(c[1] > 0 ? zero - len : zero) + .5}" width="4" height="${len}" fill="none" stroke="#ff0"/>`;
        }
    });
    chipBox.innerHTML = s;

    const axis = list => list.map(a => {
        const ay = Math.round(a[1] * sy);
        return line(0, ay, 5, ay, '#444') + `<text x="45" y="${ay + 5}" text-anchor="end">${a[0]}</text>`;
    }).join('');
    document.getElementById('kaxis').innerHTML = axis(priceAxis);
    document.getElementById('caxis').innerHTML = axis(chipAxis);

    document.getElementById('months').innerHTML = '<text x="4" y="12">2020年</text>' + months.map(m =>
        `<line x1="${Math.round(m[1] * sx) + .5}" x2="${Math.round(m[1] * sx) + .5}" y1="0" y2="16" stroke="#303030"/><text x="${m[1] * sx + 2}" y="12">${m[0]}</text>`).join('');
}

draw();
window.addEventListener('resize', draw);
```
